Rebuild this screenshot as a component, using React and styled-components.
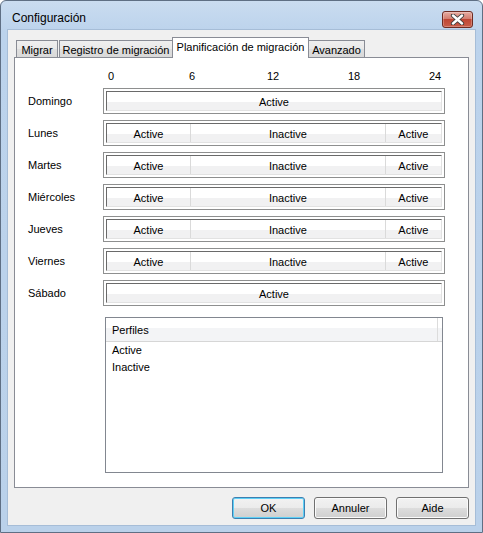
import styled, { createGlobalStyle } from "styled-components"

const GlobalStyle = createGlobalStyle`
  html, body { margin: 0; padding: 0; background: #fff; }
  body { font-family: "Liberation Sans", Arial, sans-serif; font-size: 11px; color: #000; }
  * { box-sizing: border-box; }
`

const dias = [
    { nombre: "Domingo", tramos: [{ perfil: "Active", horas: 24 }] },
    { nombre: "Lunes", tramos: [{ perfil: "Active", horas: 6 }, { perfil: "Inactive", horas: 14 }, { perfil: "Active", horas: 4 }] },
    { nombre: "Martes", tramos: [{ perfil: "Active", horas: 6 }, { perfil: "Inactive", horas: 14 }, { perfil: "Active", horas: 4 }] },
    { nombre: "Miércoles", tramos: [{ perfil: "Active", horas: 6 }, { perfil: "Inactive", horas: 14 }, { perfil: "Active", horas: 4 }] },
    { nombre: "Jueves", tramos: [{ perfil: "Active", horas: 6 }, { perfil: "Inactive", horas: 14 }, { perfil: "Active", horas: 4 }] },
    { nombre: "Viernes", tramos: [{ perfil: "Active", horas: 6 }, { perfil: "Inactive", horas: 14 }, { perfil: "Active", horas: 4 }] },
    { nombre: "Sábado", tramos: [{ perfil: "Active", horas: 24 }] },
]

const tabs = [
    { label: "Migrar", w: 42 },
    { label: "Registro de migración", w: 114 },
    { label: "Planificación de migración", w: 137, activo: true },
    { label: "Avanzado", w: 57 },
]

const marcas = [0, 6, 12, 18, 24]

export default function App() {
    return (
        <>
            <GlobalStyle />
            <Ventana>
                <BarraTitulo>
                    <Titulo>Configuración</Titulo>
                    <Cerrar>
                        <svg width="15" height="11" viewBox="0 0 15 11">
                            <path d="M3 1.5 L12 9.5 M12 1.5 L3 9.5" stroke="#3b3b3b" strokeWidth="4.2" strokeLinecap="round" />
                            <path d="M3 1.5 L12 9.5 M12 1.5 L3 9.5" stroke="#fff" strokeWidth="2.4" strokeLinecap="round" />
                        </svg>
                    </Cerrar>
                </BarraTitulo>
                <Cliente>
                    <Pestanas>
                        {tabs.map(t => (
                            <Pestana key={t.label} w={t.w} activo={t.activo}>{t.label}</Pestana>
                        ))}
                    </Pestanas>
                    <Panel>
                        <Eje>
                            {marcas.map(h => (
                                <Marca key={h} style={{ left: 8 + (h / 24) * 324 }}>{h}</Marca>
                            ))}
                        </Eje>
                        <Semana>
                            {dias.map(d => (
                                <Fila key={d.nombre}>
                                    <Dia>{d.nombre}</Dia>
                                    <Barra>
                                        <Pista>
                                            {d.tramos.map((t, i) => (
                                                <Tramo key={i} horas={t.horas}>{t.perfil}</Tramo>
                                            ))}
                                        </Pista>
                                    </Barra>
                                </Fila>
                            ))}
                        </Semana>
                        <Lista>
                            <Cabecera>
                                <CeldaCabecera>Perfiles</CeldaCabecera>
                            </Cabecera>
                            <Item>Active</Item>
                            <Item>Inactive</Item>
                        </Lista>
                    </Panel>
                    <Botones>
                        <Boton predeterminado>OK</Boton>
                        <Boton>Annuler</Boton>
                        <Boton>Aide</Boton>
                    </Botones>
                </Cliente>
            </Ventana>
        </>
    )
}

const Ventana = styled.div`
    width: 483px;
    height: 533px;
    border: 1px solid #5f6f84;
    border-radius: 6px 6px 0 0;
    background: linear-gradient(180deg, #cadcf0 0px, #bcd3ec 30px, #bad1ea 100%);
    display: flex;
    flex-direction: column;
`

const BarraTitulo = styled.div`
    height: 29px;
    display: flex;
    justify-content: space-between;
    align-items: flex-start;
    padding: 9px 9px 0 11px;
`

const Titulo = styled.div`
    font-size: 12px;
    line-height: 16px;
    color: #000;
`

const Cerrar = styled.div`
    margin-top: 1px;
    width: 31px;
    height: 17px;
    border: 1px solid #6e2b22;
    border-radius: 3px;
    background: linear-gradient(180deg, #e6aca2 0%, #d47e70 45%, #bf4634 50%, #c85d49 100%);
    box-shadow: inset 0 0 0 1px rgba(255, 255, 255, 0.25);
    display: flex;
    align-items: center;
    justify-content: center;
`

const Cliente = styled.div`
    flex: 1;
    margin: 0 7px 7px 7px;
    background: #f0f0f0;
    box-shadow: 0 0 0 1px #a6bdd7;
    padding: 7px 6px 0 6px;
    display: flex;
    flex-direction: column;
`

const Pestanas = styled.div`
    height: 21px;
    display: flex;
    align-items: flex-end;
    padding-left: 2px;
`

const Pestana = styled.div`
    width: ${p => p.w}px;
    height: ${p => p.activo ? 21 : 18}px;
    margin-left: ${p => p.activo ? -1 : 1}px;
    &:first-child { margin-left: 0; }
    &:last-child { margin-left: -1px; }
    border: 1px solid #898c95;
    border-bottom: none;
    background: ${p => p.activo ? "#fff" : "linear-gradient(180deg, #efefef 0%, #e8e8e8 50%, #dedede 50%, #d8d8d8 100%)"};
    position: ${p => p.activo ? "relative" : "static"};
    z-index: ${p => p.activo ? 1 : "auto"};
    display: flex;
    align-items: center;
    justify-content: center;
    padding-bottom: ${p => p.activo ? 2 : 0}px;
    white-space: nowrap;
`

const Panel = styled.div`
    height: 431px;
    margin-top: -1px;
    border: 1px solid #898c95;
    background: #fff;
    padding: 12px 0 0 13px;
`

const Eje = styled.div`
    position: relative;
    height: 13px;
    margin-left: 75px;
    width: 342px;
    margin-bottom: 5px;
`

const Marca = styled.span`
    position: absolute;
    top: 0;
    transform: translateX(-50%);
    line-height: 13px;
`

const Semana = styled.div`
    display: flex;
    flex-direction: column;
    gap: 6px;
`

const Fila = styled.div`
    display: grid;
    grid-template-columns: 75px 342px;
    height: 26px;
    align-items: center;
`

const Dia = styled.div`
    line-height: 13px;
`

const Barra = styled.div`
    height: 26px;
    border: 1px solid #8e8f8f;
    padding: 2px;
    background: #fff;
    display: flex;
`

const Pista = styled.div`
    flex: 1;
    display: flex;
    border-top: 1px solid #6a6a6a;
    border-left: 1px solid #6a6a6a;
    border-right: 1px solid #e2e2e2;
    border-bottom: 1px solid #e2e2e2;
    box-shadow: inset 1px 1px 0 #a2a2a2;
`

const Tramo = styled.div`
    flex: ${p => p.horas} 1 0;
    background: linear-gradient(180deg, #ffffff 0%, #ffffff 55%, #f1f1f2 55%, #f1f1f2 100%);
    border-left: 1px solid #dadada;
    &:first-child { border-left: none; }
    text-align: center;
    line-height: 13px;
    padding-top: 4px;
`

const Lista = styled.div`
    margin: 11px 0 0 77px;
    width: 338px;
    height: 156px;
    border: 1px solid #828790;
    background: #fff;
`

const Cabecera = styled.div`
    height: 24px;
    display: flex;
    background: linear-gradient(180deg, #ffffff 0%, #ffffff 45%, #f3f4f6 45%, #f3f4f6 100%);
    border-bottom: 1px solid #d6d6d6;
    padding-right: 4px;
`

const CeldaCabecera = styled.div`
    flex: 1;
    border-right: 1px solid #dcdcdc;
    padding: 6px 0 0 6px;
    line-height: 13px;
`

const Item = styled.div`
    height: 17px;
    line-height: 17px;
    padding-left: 6px;
`

const Botones = styled.div`
    display: flex;
    justify-content: flex-end;
    gap: 9px;
    margin-top: 9px;
`

const Boton = styled.button`
    width: 73px;
    height: 22px;
    font-family: "Liberation Sans", Arial, sans-serif;
    font-size: 11px;
    color: #000;
    border-radius: 3px;
    border: 1px solid ${p => p.predeterminado ? "#3c7fb1" : "#707070"};
    background: linear-gradient(180deg, #f2f2f2 0%, #ebebeb 50%, #dddddd 50%, #cfcfcf 100%);
    box-shadow: inset 0 0 0 1px ${p => p.predeterminado ? "#5fd0f6" : "#fbfbfb"};
    padding: 0;
`
